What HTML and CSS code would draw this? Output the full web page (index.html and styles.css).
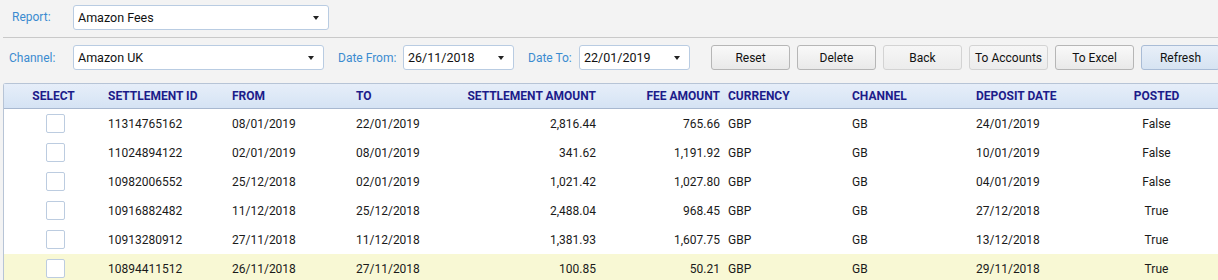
FILE: index.html
```html
<!DOCTYPE html>
<html lang="en">
<head>
    <meta charset="UTF-8">
    <title>Amazon Fees</title>
    <link rel="stylesheet" href="styles.css">
</head>
<body>
    <div class="report-bar">
        <label class="lbl lbl-report">Report:</label>
        <div class="combo combo-report">
            <span>Amazon Fees</span>
            <i class="arrow"></i>
        </div>
    </div>

    <div class="filter-bar">
        <label class="lbl lbl-channel">Channel:</label>
        <div class="combo combo-channel">
            <span>Amazon UK</span>
            <i class="arrow"></i>
        </div>
        <label class="lbl lbl-from">Date From:</label>
        <div class="combo combo-date">
            <span>26/11/2018</span>
            <i class="arrow"></i>
        </div>
        <label class="lbl lbl-to">Date To:</label>
        <div class="combo combo-date">
            <span>22/01/2019</span>
            <i class="arrow"></i>
        </div>
        <div class="buttons">
            <button class="btn">Reset</button>
            <button class="btn">Delete</button>
            <button class="btn btn-light">Back</button>
            <button class="btn btn-light">To Accounts</button>
            <button class="btn">To Excel</button>
            <button class="btn btn-blue">Refresh</button>
        </div>
    </div>

    <div class="grid">
        <table>
            <colgroup>
                <col class="c-select">
                <col class="c-std"><col class="c-std"><col class="c-std"><col class="c-std">
                <col class="c-std"><col class="c-std"><col class="c-std"><col class="c-std">
                <col>
            </colgroup>
            <thead>
                <tr>
                    <th class="center">SELECT</th>
                    <th>SETTLEMENT ID</th>
                    <th>FROM</th>
                    <th>TO</th>
                    <th class="num">SETTLEMENT AMOUNT</th>
                    <th class="num">FEE AMOUNT</th>
                    <th>CURRENCY</th>
                    <th>CHANNEL</th>
                    <th>DEPOSIT DATE</th>
                    <th class="center">POSTED</th>
                </tr>
            </thead>
            <tbody>
                <tr>
                    <td class="center"><span class="check"></span></td>
                    <td>11314765162</td><td>08/01/2019</td><td>22/01/2019</td>
                    <td class="num">2,816.44</td><td class="num">765.66</td>
                    <td>GBP</td><td>GB</td><td>24/01/2019</td><td class="center">False</td>
                </tr>
                <tr>
                    <td class="center"><span class="check"></span></td>
                    <td>11024894122</td><td>02/01/2019</td><td>08/01/2019</td>
                    <td class="num">341.62</td><td class="num">1,191.92</td>
                    <td>GBP</td><td>GB</td><td>10/01/2019</td><td class="center">False</td>
                </tr>
                <tr>
                    <td class="center"><span class="check"></span></td>
                    <td>10982006552</td><td>25/12/2018</td><td>02/01/2019</td>
                    <td class="num">1,021.42</td><td class="num">1,027.80</td>
                    <td>GBP</td><td>GB</td><td>04/01/2019</td><td class="center">False</td>
                </tr>
                <tr>
                    <td class="center"><span class="check"></span></td>
                    <td>10916882482</td><td>11/12/2018</td><td>25/12/2018</td>
                    <td class="num">2,488.04</td><td class="num">968.45</td>
                    <td>GBP</td><td>GB</td><td>27/12/2018</td><td class="center">True</td>
                </tr>
                <tr>
                    <td class="center"><span class="check"></span></td>
                    <td>10913280912</td><td>27/11/2018</td><td>11/12/2018</td>
                    <td class="num">1,381.93</td><td class="num">1,607.75</td>
                    <td>GBP</td><td>GB</td><td>13/12/2018</td><td class="center">True</td>
                </tr>
                <tr class="hover">
                    <td class="center"><span class="check"></span></td>
                    <td>10894411512</td><td>26/11/2018</td><td>27/11/2018</td>
                    <td class="num">100.85</td><td class="num">50.21</td>
                    <td>GBP</td><td>GB</td><td>29/11/2018</td><td class="center">True</td>
                </tr>
            </tbody>
        </table>
    </div>
</body>
</html>
```

FILE: styles.css
```css
body {
    margin: 0;
    background: #f3f3f3;
    font-family: Roboto, 'Liberation Sans', sans-serif;
    font-size: 12px;
    color: #1a1a1a;
    overflow: hidden;
}

/* Top selector bars */
.report-bar {
    display: flex;
    align-items: flex-start;
    height: 38px;
    padding-top: 5px;
    box-sizing: border-box;
    margin-left: 3px;
    border-bottom: 1px solid #c9c9c9;
}

.filter-bar {
    display: flex;
    align-items: center;
    margin-top: 7px;
    height: 25px;
}

.filter-bar > * {
    flex-shrink: 0;
}

.lbl {
    color: #3b8bd0;
    font-size: 12px;
}

.lbl-report { width: 61px; padding-left: 9px; line-height: 25px; }
.lbl-channel { width: 64px; padding-left: 9px; }
.lbl-from { margin-left: 14px; width: 65px; }
.lbl-to { margin-left: 14px; width: 51px; }

.combo {
    position: relative;
    height: 25px;
    box-sizing: border-box;
    background: #fff;
    border: 1px solid #b9cce2;
    border-radius: 3px;
    padding-left: 4px;
    line-height: 23px;
    font-size: 12.5px;
    color: #111;
}

.combo-report { width: 256px; }
.combo-channel { width: 251px; }
.combo-date { width: 111px; }

.arrow {
    position: absolute;
    right: 9px;
    top: 10px;
    border-left: 3.5px solid transparent;
    border-right: 3.5px solid transparent;
    border-top: 4px solid #222;
}

/* Buttons */
.buttons {
    display: flex;
    gap: 7px;
    margin-left: 21px;
}

.btn {
    flex-shrink: 0;
    width: 79px;
    height: 25px;
    box-sizing: border-box;
    padding: 0;
    font-family: Roboto, 'Liberation Sans', sans-serif;
    font-size: 12px;
    color: #111;
    background: linear-gradient(#f9f9f9, #e9e9e9);
    border: 1px solid #b6b6b6;
    border-radius: 3px;
}

.btn-light {
    border-color: #d3d3d3;
    background: linear-gradient(#f6f6f6, #ececec);
}

.btn-blue {
    background: linear-gradient(#e8eff8, #d6e3f2);
    border-color: #a9bcd6;
}

/* Grid */
.grid {
    margin: 13px 0 0 3px;
    border-left: 1px solid #b7c4d6;
    border-top: 1px solid #b7c4d6;
    border-top-left-radius: 3px;
    background: #fff;
}

table {
    width: 100%;
    border-collapse: collapse;
    table-layout: fixed;
}

.c-select { width: 99px; }
.c-std { width: 124px; }

th {
    height: 24px;
    padding: 0 5px;
    text-align: left;
    font-size: 12px;
    font-weight: bold;
    color: #1c1c8a;
    background: linear-gradient(#e6eef9, #d5e3f4);
    border-bottom: 1px solid #a8b8d0;
    white-space: nowrap;
}

td {
    height: 29px;
    padding: 0 5px;
    font-size: 12px;
    white-space: nowrap;
    color: #1a1a1a;
}

th.num, td.num { text-align: right; padding-right: 3px; }
th.num { direction: rtl; }
th.center, td.center { text-align: center; }

tr.hover td { background: #f8f8d4; }

.check {
    display: inline-block;
    width: 17px;
    height: 17px;
    vertical-align: middle;
    background: #fff;
    border: 1px solid #bccce0;
    border-radius: 2px;
    margin-left: 4px;
}
```
